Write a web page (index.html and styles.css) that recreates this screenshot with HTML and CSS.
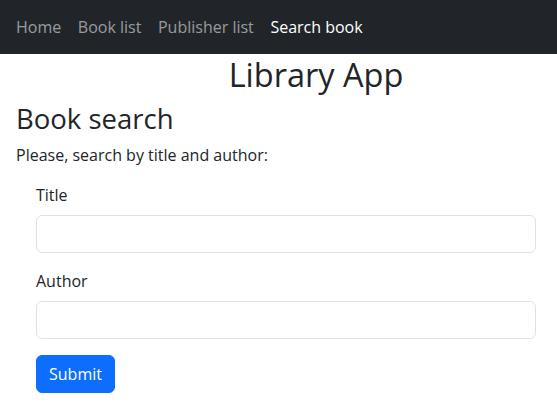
FILE: index.html
```html
<!DOCTYPE html>
<html lang="en">
<head>
<meta charset="utf-8">
<title>Library App</title>
<link rel="stylesheet" href="styles.css">
</head>
<body>
<nav class="navbar">
  <ul class="nav">
    <li><a class="nav-link" href="#">Home</a></li>
    <li><a class="nav-link" href="#">Book list</a></li>
    <li><a class="nav-link" href="#">Publisher list</a></li>
    <li><a class="nav-link active" href="#">Search book</a></li>
  </ul>
</nav>
<main class="container">
  <h1 class="app-title">Library App</h1>
  <h2 class="page-title">Book search</h2>
  <p class="lead-text">Please, search by title and author:</p>
  <form class="search-form">
    <div class="field">
      <label class="form-label" for="title">Title</label>
      <input class="form-control" id="title" type="text">
    </div>
    <div class="field">
      <label class="form-label" for="author">Author</label>
      <input class="form-control" id="author" type="text">
    </div>
    <button class="btn-primary" type="submit">Submit</button>
  </form>
</main>
</body>
</html>
```
FILE: styles.css
```css
* { box-sizing: border-box; }
html, body { margin: 0; }
body {
  font-family: "Open Sans", "Noto Sans", sans-serif;
  font-size: 16px;
  line-height: 1.5;
  color: #212529;
  background: #fff;
}
.navbar {
  background: #212529;
  padding: 7px 7.7px;
}
.nav {
  list-style: none;
  margin: 0;
  padding: 0;
  display: flex;
}
.nav-link {
  display: block;
  padding: 8px 8.3px;
  color: rgba(255,255,255,0.55);
  text-decoration: none;
}
.nav-link.active { color: #fff; }
.container { padding: 0 16px; }
.app-title {
  margin: 1px 0 8px;
  padding-left: 75px;
  font-size: 32.5px;
  font-weight: 400;
  line-height: 1.2;
  text-align: center;
}
.page-title {
  margin: 0 0 7.5px;
  font-size: 27.5px;
  font-weight: 400;
  line-height: 1.2;
}
.lead-text { margin: 0 0 16px; }
.search-form { padding: 0 5px 0 20px; }
.field { margin-bottom: 16px; }
.form-label { display: block; margin-bottom: 8px; }
.form-control {
  display: block;
  width: 100%;
  height: 38px;
  padding: 6px 12px;
  font: inherit;
  border: 1px solid #dee2e6;
  border-radius: 6px;
  background: #fff;
}
.btn-primary {
  font: inherit;
  color: #fff;
  background: #0d6efd;
  border: 1px solid #0d6efd;
  border-radius: 6px;
  padding: 6px 12px;
  height: 38px;
}
```
